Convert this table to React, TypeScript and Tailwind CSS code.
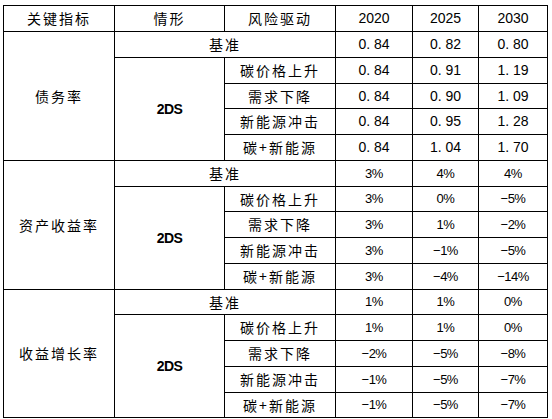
import React from "react";

type Section = {
  label: string;
  decimal: boolean;
  base: string[];
  rows: { driver: string; values: string[] }[];
};

const drivers = ["碳价格上升", "需求下降", "新能源冲击", "碳+新能源"];

const sections: Section[] = [
  {
    label: "债务率",
    decimal: true,
    base: ["0.84", "0.82", "0.80"],
    rows: [
      { driver: drivers[0], values: ["0.84", "0.91", "1.19"] },
      { driver: drivers[1], values: ["0.84", "0.90", "1.09"] },
      { driver: drivers[2], values: ["0.84", "0.95", "1.28"] },
      { driver: drivers[3], values: ["0.84", "1.04", "1.70"] },
    ],
  },
  {
    label: "资产收益率",
    decimal: false,
    base: ["3%", "4%", "4%"],
    rows: [
      { driver: drivers[0], values: ["3%", "0%", "−5%"] },
      { driver: drivers[1], values: ["3%", "1%", "−2%"] },
      { driver: drivers[2], values: ["3%", "−1%", "−5%"] },
      { driver: drivers[3], values: ["3%", "−4%", "−14%"] },
    ],
  },
  {
    label: "收益增长率",
    decimal: false,
    base: ["1%", "1%", "0%"],
    rows: [
      { driver: drivers[0], values: ["1%", "1%", "0%"] },
      { driver: drivers[1], values: ["−2%", "−5%", "−8%"] },
      { driver: drivers[2], values: ["−1%", "−5%", "−7%"] },
      { driver: drivers[3], values: ["−1%", "−5%", "−7%"] },
    ],
  },
];

const cjk = "font-['Noto_Sans_CJK_SC',sans-serif] text-[14px] tracking-[2px]";
const cell = "border border-black text-center align-middle p-0";

// every 4th row is one pixel shorter
const rowH = (i: number) => (i % 4 === 3 ? "h-[25px]" : "h-[26px]");

function Value({ v, decimal }: { v: string; decimal: boolean }) {
  return (
    <td
      className={`${cell} font-['Liberation_Sans',sans-serif] ${
        decimal ? "text-[14px]" : "text-[13px] tracking-[-0.5px]"
      }`}
    >
      {decimal ? v.replace(".", ". ") : v}
    </td>
  );
}

export default function App() {
  let r = 1;
  return (
    <div className="w-[552px] h-[419px] bg-white pl-[3px] pt-[5px] text-black">
      <table className="border-collapse w-[544px] table-fixed">
        <colgroup>
          <col className="w-[111px]" />
          <col className="w-[110px]" />
          <col className="w-[111px]" />
          <col className="w-[77px]" />
          <col className="w-[66px]" />
          <col className="w-[69px]" />
        </colgroup>
        <tbody>
          <tr className="h-[26px]">
            <td className={`${cell} ${cjk}`}>关键指标</td>
            <td className={`${cell} ${cjk}`}>情形</td>
            <td className={`${cell} ${cjk}`}>风险驱动</td>
            <td className={`${cell} font-['Liberation_Sans',sans-serif] text-[14px]`}>2020</td>
            <td className={`${cell} font-['Liberation_Sans',sans-serif] text-[14px]`}>2025</td>
            <td className={`${cell} font-['Liberation_Sans',sans-serif] text-[14px]`}>2030</td>
          </tr>
          {sections.map((s) => {
            const baseIdx = r++;
            return (
              <React.Fragment key={s.label}>
                <tr className={rowH(baseIdx)}>
                  <td rowSpan={5} className={`${cell} ${cjk}`}>
                    {s.label}
                  </td>
                  <td colSpan={2} className={`${cell} ${cjk}`}>
                    基准
                  </td>
                  {s.base.map((v, i) => (
                    <Value key={i} v={v} decimal={s.decimal} />
                  ))}
                </tr>
                {s.rows.map((row, j) => {
                  const idx = r++;
                  return (
                    <tr key={row.driver} className={rowH(idx)}>
                      {j === 0 && (
                        <td
                          rowSpan={4}
                          className={`${cell} font-['Liberation_Sans',sans-serif] text-[14px] font-bold tracking-[-0.5px]`}
                        >
                          2DS
                        </td>
                      )}
                      <td className={`${cell} ${cjk}`}>{row.driver}</td>
                      {row.values.map((v, i) => (
                        <Value key={i} v={v} decimal={s.decimal} />
                      ))}
                    </tr>
                  );
                })}
              </React.Fragment>
            );
          })}
        </tbody>
      </table>
    </div>
  );
}
